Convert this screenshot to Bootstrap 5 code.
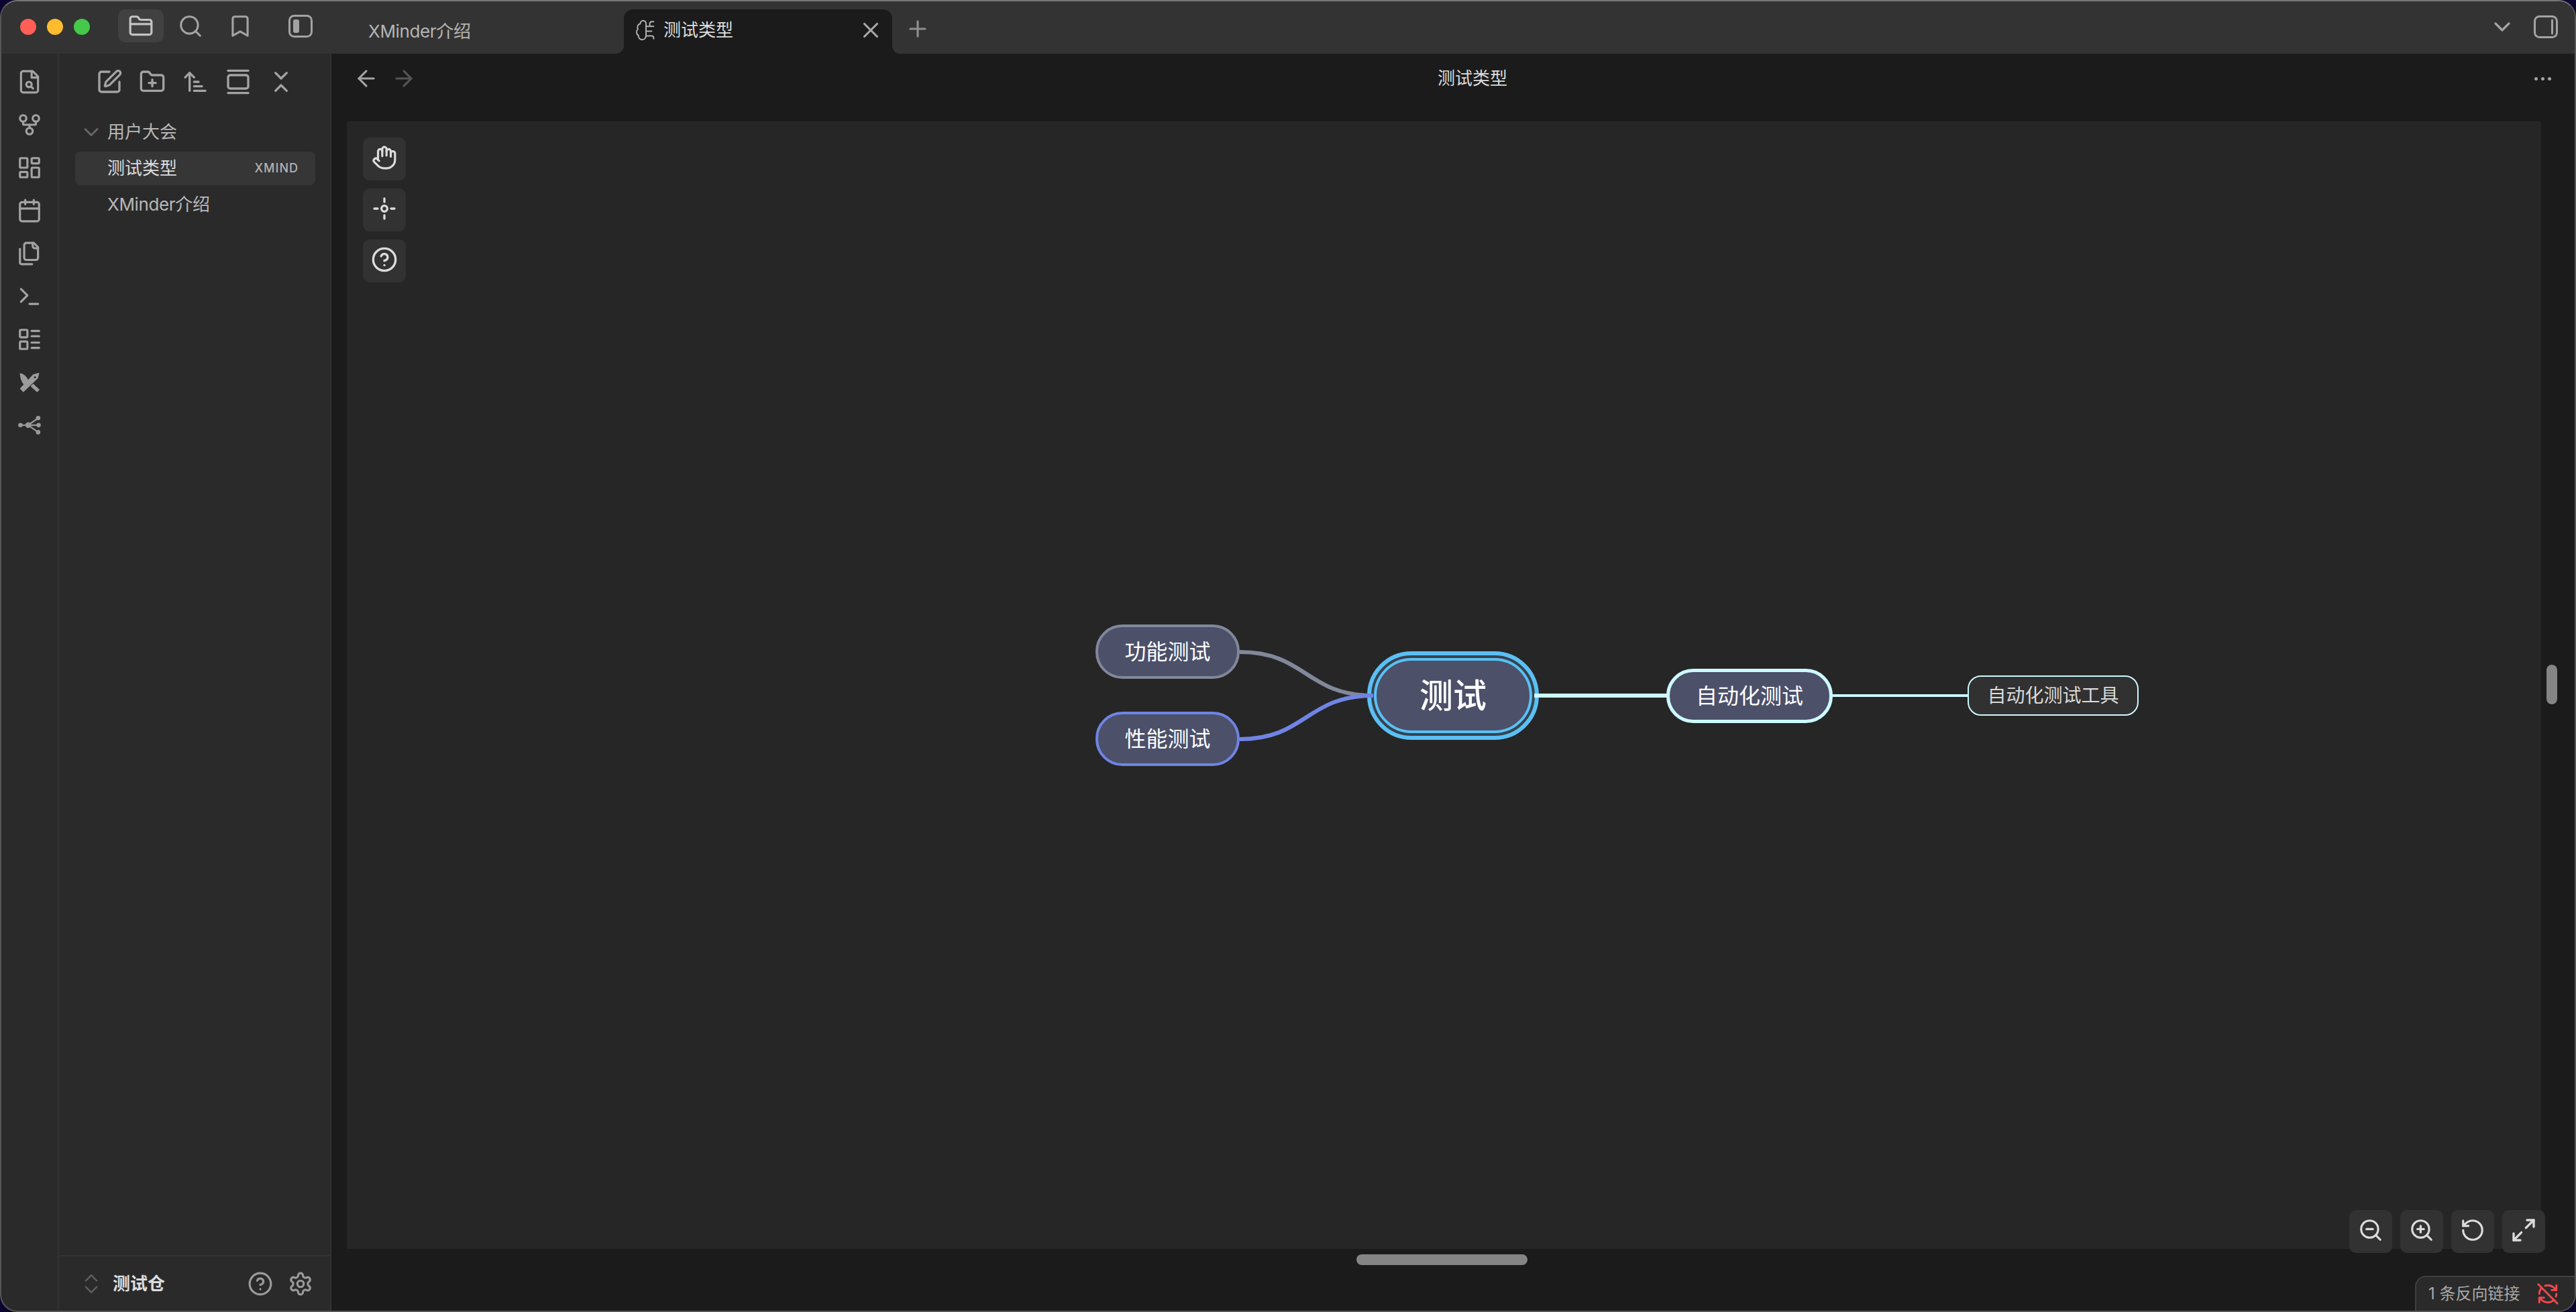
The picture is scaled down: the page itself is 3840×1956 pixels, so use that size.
<!DOCTYPE html>
<html lang="zh-CN">
<head>
    <meta charset="UTF-8">
    <title>测试类型 - 测试仓</title>
    <link href="https://cdn.jsdelivr.net/npm/bootstrap@5.3.3/dist/css/bootstrap.min.css" rel="stylesheet">
    <style>
        html, body { height: 100%; }
        body { margin: 0; background: #0c0530; font-family: Inter, "Noto Sans CJK SC", sans-serif; font-size: 26px; overflow: hidden; }
        .ico { fill: none; stroke: currentColor; stroke-width: 2; stroke-linecap: round; stroke-linejoin: round; flex: none; display: block; }
        .ico-solid { fill: #9c9c9c; flex: none; display: block; }
        .tight-latin { letter-spacing: -0.35px; }

        .app-win { height: 100vh; border: 2px solid #565656; border-top-color: #777; border-radius: 26px; overflow: hidden; background: #2a2a2a; }
        .main-row { min-height: 0; }

        /* title bar */
        .tbar { height: 78px; background: #333; color: #a3a3a3; flex: none; }
        .lights { margin-left: 28px; gap: 16px; margin-right: 42px; height: 76px; }
        .light { width: 24px; height: 24px; border-radius: 50%; }
        .light-r { background: #ff5f57; }
        .light-y { background: #febc2e; }
        .light-g { background: #44c94a; }
        .tb-btn { width: 68px; height: 49px; margin-top: 12px; margin-right: 6px; border-radius: 10px; }
        .tb-btn.is-on { background: #414141; color: #c4c4c4; }
        .tb-btn-side { margin-left: 16px; margin-right: 48px; }
        .doc-tab { width: 400px; margin-top: 12px; padding: 0 19px; color: #b5b5b5; border-radius: 14px 14px 0 0; line-height: 1; }
        .doc-tab.is-on { background: #1b1b1b; color: #dcdcdc; }
        .doc-tab.is-on::before, .doc-tab.is-on::after { content: ""; position: absolute; bottom: 0; width: 12px; height: 12px; }
        .doc-tab.is-on::before { left: -12px; background: radial-gradient(circle at 0 0, transparent 11.5px, #1b1b1b 12.5px); }
        .doc-tab.is-on::after { right: -12px; background: radial-gradient(circle at 100% 0, transparent 11.5px, #1b1b1b 12.5px); }
        .tab-brain { margin-left: -3px; margin-top: -4px; color: #b0b0b0; stroke-width: 1.4; }
        .tab-name { margin-left: 9px; margin-top: -4px; }
        .tab-x { color: #a8a8a8; margin-top: -4px; margin-left: auto; margin-right: -6px; }
        .tab-plus { margin-left: 19px; margin-top: 3px; color: #8f8f8f; height: 76px; }
        .tb-end { margin-left: auto; margin-right: 25px; gap: 27px; height: 76px; }

        /* ribbon and file pane */
        .ribbon { width: 86px; padding-top: 10px; border-right: 2px solid #333; color: #a3a3a3; flex: none; }
        .rib-btn { height: 64px; }
        .pane { width: 406px; border-right: 2px solid #333; flex: none; }
        .pane-tools { height: 64px; margin-top: 10px; padding-left: 43px; color: #a3a3a3; flex: none; }
        .pane-btn { width: 64px; height: 64px; }
        .tree-list { --bs-list-group-bg: transparent; --bs-list-group-border-width: 0; --bs-list-group-color: #b8b8b8; --bs-list-group-active-bg: #363636; --bs-list-group-active-color: #dcdcdc; --bs-list-group-item-padding-x: 0; --bs-list-group-item-padding-y: 0; --bs-list-group-border-radius: 8px; margin: 18px 22px 0 24px; gap: 4px; }
        .tree-row { height: 50px; padding-left: 48px; padding-right: 25px; border-radius: 8px; line-height: 1; }
        .tree-row.tree-dir { padding-left: 6px; }
        .tree-chev { color: #666; margin-right: 6px; }
        .tree-kind { margin-left: auto; font-size: 18px; font-weight: 500; letter-spacing: 1px; color: #b3b3b3; }
        .pane-foot { margin-top: auto; height: 83px; padding: 0 25px 0 34px; border-top: 2px solid #333; flex: none; }
        .vault-chev { color: #5f5f5f; margin-right: 18px; }
        .vault-name { font-weight: 600; color: #dcdcdc; }
        .foot-icons { margin-left: auto; gap: 22px; color: #9a9a9a; }

        /* note area */
        .doc-area { background: #1b1b1b; min-width: 0; }
        .doc-head { height: 74px; color: #a3a3a3; flex: none; }
        .nav-arrows { margin-left: 33px; gap: 18px; }
        .nav-dim { color: #555; }
        .doc-title { font-size: 26px; color: #dcdcdc; line-height: 1; }
        .more-dots { width: 42px; margin-right: 27px; gap: 5px; }
        .more-dots i { width: 5px; height: 5px; border-radius: 50%; background: #a3a3a3; }

        .canvas-box { margin: 27px 50px 92px 23px; background: #262626; }
        .tool-stack { left: 24px; top: 24px; gap: 12px; }
        .tool-row { right: -6px; bottom: -6px; gap: 12px; }
        .tool-btn { width: 64px; height: 64px; padding-bottom: 4px; border-radius: 10px; background: #323232; color: #dcdcdc; }

        /* mind map */
        .map-lines { left: 0; top: 0; width: 100%; height: 100%; z-index: 2; fill: none; }
        .map-node { position: absolute; color: #fff; line-height: 1; white-space: nowrap; box-sizing: border-box; display: flex; align-items: center; justify-content: center; }
        .nd-sub { width: 215px; height: 81px; left: 1116px; font-size: 32px; background: #4c5069; border-radius: 40px; border: 4px solid; z-index: 3; }
        .nd-func { top: 750px; border-color: #808899; }
        .nd-perf { top: 880px; border-color: #7084e5; }
        .nd-root { left: 1521px; top: 790px; width: 256px; height: 132px; padding: 4px; border: 6px solid #5ac0f4; border-radius: 66px; background: #36434f; }
        .nd-root-in { width: 100%; height: 100%; border: 4px solid #5ac0f4; border-radius: 56px; background: #4c5069; font-size: 50px; font-weight: 500; position: relative; z-index: 3; }
        .nd-auto { left: 1967px; top: 816px; width: 248px; height: 81px; font-size: 32px; background: #4c5069; border: 5px solid #cdf9ff; border-radius: 40px; z-index: 3; }
        .nd-tool { left: 2416px; top: 826px; width: 255px; height: 60px; font-size: 28px; color: #dadada; background: #313131; border: 2px solid #cdf9ff; border-radius: 20px; z-index: 3; }

        /* overlays */
        .bar-v { right: 26px; top: 911px; width: 16px; height: 59px; border-radius: 8px; background: #858585; }
        .bar-h { left: 1528px; bottom: 68px; width: 255px; height: 16px; border-radius: 8px; background: #858585; }
        .status-tag { right: 0; bottom: 0; height: 52px; width: 238px; padding-left: 18px; background: #2a2a2a; border: 2px solid #3f3f3f; border-width: 2px 0 0 2px; border-top-left-radius: 16px; color: #a8a8a8; font-size: 24px; line-height: 1; }
        .sync-off { color: #fb464c; margin-left: 24px; }
    </style>
</head>
<body>
<div class="app-win d-flex flex-column">
    <!-- title bar -->
    <div class="tbar d-flex align-items-start">
        <div class="lights d-flex align-items-center">
            <span class="light light-r"></span><span class="light light-y"></span><span class="light light-g"></span>
        </div>
        <div class="tb-btn is-on d-flex align-items-center justify-content-center">
            <svg class="ico" width="38" height="38" viewBox="0 0 24 24"><path d="M20 20a2 2 0 0 0 2-2V8a2 2 0 0 0-2-2h-7.9a2 2 0 0 1-1.69-.9L9.6 3.9A2 2 0 0 0 7.93 3H4a2 2 0 0 0-2 2v13a2 2 0 0 0 2 2Z"/><path d="M2 10h20"/></svg>
        </div>
        <div class="tb-btn d-flex align-items-center justify-content-center">
            <svg class="ico" width="38" height="38" viewBox="0 0 24 24"><circle cx="11" cy="11" r="8"/><path d="m21 21-4.3-4.3"/></svg>
        </div>
        <div class="tb-btn d-flex align-items-center justify-content-center">
            <svg class="ico" width="38" height="38" viewBox="0 0 24 24"><path d="m19 21-7-4-7 4V5a2 2 0 0 1 2-2h10a2 2 0 0 1 2 2v16z"/></svg>
        </div>
        <div class="tb-btn tb-btn-side d-flex align-items-center justify-content-center">
            <svg width="36" height="34" viewBox="0 0 36 34" fill="none"><rect x="1.5" y="1.5" width="33" height="31" rx="7" stroke="currentColor" stroke-width="3"/><rect x="7" y="7" width="9" height="20" rx="3" fill="currentColor"/></svg>
        </div>
        <div class="doc-tab position-relative d-flex align-items-center align-self-stretch">
            <span class="tight-latin">XMinder介绍</span>
        </div>
        <div class="doc-tab is-on position-relative d-flex align-items-center align-self-stretch">
            <svg class="ico tab-brain" width="34" height="34" viewBox="0 0 24 24"><path d="M12 5a3 3 0 1 0-5.997.125 4 4 0 0 0-2.526 5.77 4 4 0 0 0 .556 6.588A4 4 0 1 0 12 18Z"/><path d="M12 13h6"/><path d="M12 18h6a2 2 0 0 1 2 2v1"/><path d="M12 8h8"/><path d="M16 8V5a2 2 0 0 1 2-2h2"/></svg>
            <span class="tab-name">测试类型</span>
            <svg class="ico tab-x" width="38" height="38" viewBox="0 0 24 24" stroke-width="1.7"><path d="M18 6 6 18"/><path d="m6 6 12 12"/></svg>
        </div>
        <div class="tab-plus d-flex align-items-center">
            <svg class="ico" width="38" height="38" viewBox="0 0 24 24" stroke-width="1.7"><path d="M5 12h14"/><path d="M12 5v14"/></svg>
        </div>
        <div class="tb-end d-flex align-items-center">
            <svg class="ico" width="40" height="40" viewBox="0 0 24 24" stroke-width="1.8"><path d="m6 9 6 6 6-6"/></svg>
            <svg width="36" height="34" viewBox="0 0 36 34" fill="none"><rect x="1.5" y="1.5" width="33" height="31" rx="7" stroke="currentColor" stroke-width="3"/><path d="M27.5 7v20" stroke="currentColor" stroke-width="3" stroke-linecap="round"/></svg>
        </div>
    </div>

    <div class="main-row d-flex flex-grow-1">
        <!-- ribbon -->
        <div class="ribbon d-flex flex-column">
            <div class="rib-btn d-flex align-items-center justify-content-center"><svg class="ico" width="38" height="38" viewBox="0 0 24 24"><path d="M6 2h9l5 5v13a2 2 0 0 1-2 2H6a2 2 0 0 1-2-2V4a2 2 0 0 1 2-2z"/><path d="M14 2v6h6"/><circle cx="11.5" cy="14.5" r="2.5"/><path d="m13.5 16.5 1.8 1.8"/></svg></div>
            <div class="rib-btn d-flex align-items-center justify-content-center"><svg class="ico" width="38" height="38" viewBox="0 0 24 24"><circle cx="12" cy="18" r="3"/><circle cx="6" cy="6" r="3"/><circle cx="18" cy="6" r="3"/><path d="M18 9v2c0 .6-.4 1-1 1H7c-.6 0-1-.4-1-1V9"/><path d="M12 12v3"/></svg></div>
            <div class="rib-btn d-flex align-items-center justify-content-center"><svg class="ico" width="38" height="38" viewBox="0 0 24 24"><rect x="3" y="3" width="7" height="9" rx="1"/><rect x="14" y="3" width="7" height="5" rx="1"/><rect x="14" y="12" width="7" height="9" rx="1"/><rect x="3" y="16" width="7" height="5" rx="1"/></svg></div>
            <div class="rib-btn d-flex align-items-center justify-content-center"><svg class="ico" width="38" height="38" viewBox="0 0 24 24"><path d="M8 2v4"/><path d="M16 2v4"/><rect x="3" y="4" width="18" height="18" rx="2"/><path d="M3 10h18"/></svg></div>
            <div class="rib-btn d-flex align-items-center justify-content-center"><svg class="ico" width="38" height="38" viewBox="0 0 24 24"><path d="M20 7h-3a2 2 0 0 1-2-2V2"/><path d="M9 18a2 2 0 0 1-2-2V4a2 2 0 0 1 2-2h7l4 4v10a2 2 0 0 1-2 2Z"/><path d="M3 7.6v12.8A1.6 1.6 0 0 0 4.6 22h9.8"/></svg></div>
            <div class="rib-btn d-flex align-items-center justify-content-center"><svg class="ico" width="38" height="38" viewBox="0 0 24 24"><path d="m4 17 6-6-6-6"/><path d="M12 19h8"/></svg></div>
            <div class="rib-btn d-flex align-items-center justify-content-center"><svg class="ico" width="38" height="38" viewBox="0 0 24 24"><rect x="3" y="3" width="7" height="7" rx="1"/><rect x="3" y="14" width="7" height="7" rx="1"/><path d="M14 4h7"/><path d="M14 9h7"/><path d="M14 15h7"/><path d="M14 20h7"/></svg></div>
            <div class="rib-btn d-flex align-items-center justify-content-center"><svg class="ico-solid" width="30" height="30" viewBox="0 0 24 24" fill-rule="evenodd"><path d="M23.6.5 22.2 7 4.6 23.7.5 19.4 16.500 2.300ZM18.5 4.700a1.300 1.300 0 1 0 .01 0Z"/><path d="M.5 1c4 .6 7.900 3.600 10 8.300L5.300 14.700C2.400 11.500.6 6.500.5 1Z"/><path d="M16.400 13.500 24 20.800 21 23.800 13.200 16.600Z"/></svg></div>
            <div class="rib-btn d-flex align-items-center justify-content-center"><svg width="34" height="28" viewBox="0 0 102 85" fill="#999" stroke="#999"><path d="M10 42H45L90 10M45 42H92M45 42 90 74" fill="none" stroke-width="7"/><g stroke="none"><circle cx="10" cy="42" r="10"/><circle cx="45" cy="42" r="13"/><circle cx="90" cy="10" r="10"/><circle cx="92" cy="42" r="10"/><circle cx="90" cy="74" r="10"/></g></svg></div>
        </div>

        <!-- file pane -->
        <div class="pane d-flex flex-column">
            <div class="pane-tools d-flex">
                <div class="pane-btn d-flex align-items-center justify-content-center"><svg class="ico" width="40" height="40" viewBox="0 0 24 24"><path d="M12 3H5a2 2 0 0 0-2 2v14a2 2 0 0 0 2 2h14a2 2 0 0 0 2-2v-7"/><path d="M18.375 2.625a1 1 0 0 1 3 3l-9.013 9.014a2 2 0 0 1-.853.505l-2.873.84a.5.5 0 0 1-.62-.62l.84-2.873a2 2 0 0 1 .506-.852z"/></svg></div>
                <div class="pane-btn d-flex align-items-center justify-content-center"><svg class="ico" width="40" height="40" viewBox="0 0 24 24"><path d="M12 10v6"/><path d="M9 13h6"/><path d="M20 20a2 2 0 0 0 2-2V8a2 2 0 0 0-2-2h-7.900a2 2 0 0 1-1.690-.9L9.600 3.900A2 2 0 0 0 7.930 3H4a2 2 0 0 0-2 2v13a2 2 0 0 0 2 2Z"/></svg></div>
                <div class="pane-btn d-flex align-items-center justify-content-center"><svg class="ico" width="40" height="40" viewBox="0 0 24 24"><path d="m3 8 4-4 4 4"/><path d="M7 4v16"/><path d="M11 12h4"/><path d="M11 16h7"/><path d="M11 20h10"/></svg></div>
                <div class="pane-btn d-flex align-items-center justify-content-center"><svg class="ico" width="40" height="40" viewBox="0 0 24 24"><path d="M3 2h18"/><rect x="3" y="6" width="18" height="12" rx="2"/><path d="M3 22h18"/></svg></div>
                <div class="pane-btn d-flex align-items-center justify-content-center"><svg class="ico" width="40" height="40" viewBox="0 0 24 24"><path d="m7 20 5-5 5 5"/><path d="m7 4 5 5 5-5"/></svg></div>
            </div>
            <div class="list-group tree-list">
                <div class="list-group-item tree-row tree-dir d-flex align-items-center">
                    <svg class="ico tree-chev" width="36" height="36" viewBox="0 0 24 24"><path d="m6 9 6 6 6-6"/></svg>
                    <span>用户大会</span>
                </div>
                <div class="list-group-item active tree-row d-flex align-items-center">
                    <span>测试类型</span><span class="tree-kind">XMIND</span>
                </div>
                <div class="list-group-item tree-row d-flex align-items-center">
                    <span class="tight-latin">XMinder介绍</span>
                </div>
            </div>
            <div class="pane-foot d-flex align-items-center">
                <svg class="ico vault-chev" width="28" height="36" viewBox="0 0 24 30" stroke-width="2.500"><path d="m5 19 7 7 7-7"/><path d="m5 11 7-7 7 7"/></svg>
                <span class="vault-name">测试仓</span>
                <div class="foot-icons d-flex align-items-center">
                    <svg class="ico" width="38" height="38" viewBox="0 0 24 24"><circle cx="12" cy="12" r="10"/><path d="M9.090 9a3 3 0 0 1 5.830 1c0 2-3 3-3 3"/><path d="M12 17h.01"/></svg>
                    <svg class="ico" width="38" height="38" viewBox="0 0 24 24"><path d="M12.220 2h-.44a2 2 0 0 0-2 2v.18a2 2 0 0 1-1 1.730l-.43.25a2 2 0 0 1-2 0l-.15-.08a2 2 0 0 0-2.730.73l-.22.38a2 2 0 0 0 .73 2.730l.15.1a2 2 0 0 1 1 1.720v.51a2 2 0 0 1-1 1.740l-.15.09a2 2 0 0 0-.73 2.730l.22.38a2 2 0 0 0 2.730.73l.15-.08a2 2 0 0 1 2 0l.43.25a2 2 0 0 1 1 1.730V20a2 2 0 0 0 2 2h.44a2 2 0 0 0 2-2v-.18a2 2 0 0 1 1-1.730l.43-.25a2 2 0 0 1 2 0l.15.08a2 2 0 0 0 2.730-.73l.22-.39a2 2 0 0 0-.73-2.730l-.15-.08a2 2 0 0 1-1-1.740v-.5a2 2 0 0 1 1-1.740l.15-.09a2 2 0 0 0 .73-2.730l-.22-.38a2 2 0 0 0-2.730-.73l-.15.08a2 2 0 0 1-2 0l-.43-.25a2 2 0 0 1-1-1.730V4a2 2 0 0 0-2-2z"/><circle cx="12" cy="12" r="3"/></svg>
                </div>
            </div>
        </div>

        <!-- note area -->
        <div class="doc-area flex-grow-1 d-flex flex-column position-relative">
            <div class="doc-head d-flex align-items-center">
                <div class="nav-arrows d-flex">
                    <svg class="ico" width="38" height="38" viewBox="0 0 24 24"><path d="m12 19-7-7 7-7"/><path d="M19 12H5"/></svg>
                    <svg class="ico nav-dim" width="38" height="38" viewBox="0 0 24 24"><path d="M5 12h14"/><path d="m12 5 7 7-7 7"/></svg>
                </div>
                <div class="doc-title flex-grow-1 text-center">测试类型</div>
                <div class="more-dots d-flex justify-content-center"><i></i><i></i><i></i></div>
            </div>

            <div class="canvas-box flex-grow-1 position-relative">
                <svg class="map-lines position-absolute">
                    <path d="M1331 791C1430 791 1430 856 1530 856" stroke="#808899" stroke-width="6"/>
                    <path d="M1331 921C1430 921 1430 856 1530 856" stroke="#7084e5" stroke-width="6"/>
                    <path d="M1770 856H1970" stroke="#cdf9ff" stroke-width="6"/>
                    <path d="M2215 856H2416" stroke="#cdf9ff" stroke-width="4"/>
                </svg>
                <div class="map-node nd-sub nd-func">功能测试</div>
                <div class="map-node nd-sub nd-perf">性能测试</div>
                <div class="map-node nd-root"><div class="map-node nd-root-in">测试</div></div>
                <div class="map-node nd-auto">自动化测试</div>
                <div class="map-node nd-tool">自动化测试工具</div>

                <div class="tool-stack position-absolute d-flex flex-column">
                    <div class="tool-btn d-flex align-items-center justify-content-center"><svg class="ico" width="38" height="38" viewBox="0 0 24 24"><path d="M18 11V6a2 2 0 0 0-2-2a2 2 0 0 0-2 2"/><path d="M14 10V4a2 2 0 0 0-2-2a2 2 0 0 0-2 2v2"/><path d="M10 10.500V6a2 2 0 0 0-2-2a2 2 0 0 0-2 2v8"/><path d="M18 8a2 2 0 1 1 4 0v6a8 8 0 0 1-8 8h-2c-2.800 0-4.500-.86-5.990-2.340l-3.600-3.600a2 2 0 0 1 2.830-2.820L7 15"/></svg></div>
                    <div class="tool-btn d-flex align-items-center justify-content-center"><svg class="ico" width="40" height="40" viewBox="0 0 24 24"><path d="M3 12h3"/><path d="M18 12h3"/><path d="M12 3v3"/><path d="M12 18v3"/><circle cx="12" cy="12" r="2.600"/></svg></div>
                    <div class="tool-btn d-flex align-items-center justify-content-center"><svg class="ico" width="40" height="40" viewBox="0 0 24 24"><circle cx="12" cy="12" r="10"/><path d="M9.090 9a3 3 0 0 1 5.830 1c0 2-3 3-3 3"/><path d="M12 17h.01"/></svg></div>
                </div>
                <div class="tool-row position-absolute d-flex">
                    <div class="tool-btn d-flex align-items-center justify-content-center"><svg class="ico" width="38" height="38" viewBox="0 0 24 24"><circle cx="11" cy="11" r="8"/><path d="m21 21-4.300-4.300"/><path d="M8 11h6"/></svg></div>
                    <div class="tool-btn d-flex align-items-center justify-content-center"><svg class="ico" width="38" height="38" viewBox="0 0 24 24"><circle cx="11" cy="11" r="8"/><path d="m21 21-4.300-4.300"/><path d="M11 8v6"/><path d="M8 11h6"/></svg></div>
                    <div class="tool-btn d-flex align-items-center justify-content-center"><svg class="ico" width="38" height="38" viewBox="0 0 24 24"><path d="M3 12a9 9 0 1 0 9-9 9.750 9.750 0 0 0-6.740 2.740L3 8"/><path d="M3 3v5h5"/></svg></div>
                    <div class="tool-btn d-flex align-items-center justify-content-center"><svg class="ico" width="40" height="40" viewBox="0 0 24 24"><path d="M15 3h6v6"/><path d="m21 3-7 7"/><path d="m3 21 7-7"/><path d="M9 21H3v-6"/></svg></div>
                </div>
            </div>

            <div class="bar-v position-absolute"></div>
            <div class="bar-h position-absolute"></div>
            <div class="status-tag position-absolute d-flex align-items-center">
                <span>1 条反向链接</span>
                <svg class="ico sync-off" width="34" height="34" viewBox="0 0 24 24"><path d="M21 8 18.740 5.740A9.750 9.750 0 0 0 12 3C11 3 10.030 3.160 9.130 3.470"/><path d="M8 16H3v5"/><path d="M3 12C3 9.510 4 7.260 5.640 5.640"/><path d="m3 16 2.260 2.260A9.750 9.750 0 0 0 12 21c2.490 0 4.740-1 6.360-2.640"/><path d="M21 12c0 1-.16 1.970-.47 2.870"/><path d="M21 3v5h-5"/><path d="M22 22 2 2"/></svg>
            </div>
        </div>
    </div>
</div>
<script src="https://cdn.jsdelivr.net/npm/bootstrap@5.3.3/dist/js/bootstrap.bundle.min.js"></script>
</body>
</html>
